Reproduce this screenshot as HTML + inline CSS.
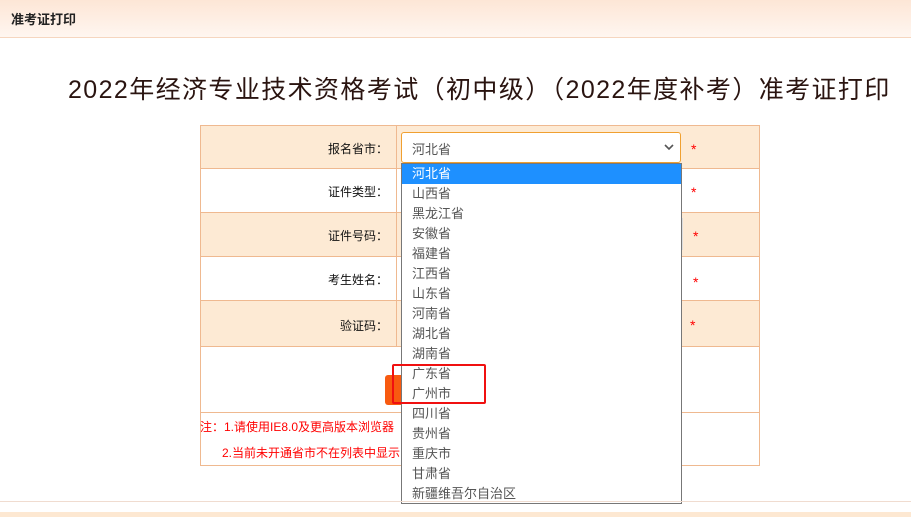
<!DOCTYPE html>
<html><head><meta charset="utf-8"><style>
*{margin:0;padding:0;box-sizing:border-box}
body{width:911px;height:517px;overflow:hidden;background:#fff;font-family:"Liberation Sans","Noto Sans CJK SC",sans-serif;position:relative}
.hdr{position:absolute;left:0;top:0;width:911px;height:38px;background:linear-gradient(180deg,#fde6d6 0%,#fff6f0 100%);border-bottom:1px solid #f6d6bf}
.hdr span{position:absolute;left:11px;top:9px;font-size:13px;font-weight:bold;color:#222}
.title{position:absolute;left:68px;top:70px;font-size:25px;color:#2a1410;white-space:nowrap;letter-spacing:1.4px}
.row{position:absolute;left:200px;width:560px;border:1px solid #efb990;border-bottom:none}
.row .lab{position:absolute;left:0;top:0;width:196px;height:100%;border-right:1px solid #efb990;text-align:right;padding-right:8px;font-size:12px;color:#111}
.bg{background:#fdead4}
.st{position:absolute;color:#f00;font-size:14px}
.sel{position:absolute;left:401px;top:132px;width:280px;height:31px;border:1px solid #f0a030;border-radius:3px;background:#fff;font-size:13px;color:#555;padding:6px 0 0 10px}
.dd{position:absolute;left:401px;top:163px;width:281px;height:341px;border:1px solid #777;background:#fff}
.dd div{height:20px;line-height:20px;padding-left:10px;font-size:13px;color:#555}
.dd .on{background:#1e90ff;color:#fff}
.note{position:absolute;font-size:12px;color:#f00;white-space:nowrap}
</style></head><body>
<div class="hdr"><span>准考证打印</span></div>
<div class="title">2022年经济专业技术资格考试（初中级）（2022年度补考）准考证打印</div>
<div class="row bg" style="top:125px;height:44px"><div class="lab" style="padding-top:14px">报名省市：</div></div>
<div class="row" style="top:168px;height:45px"><div class="lab" style="padding-top:14px">证件类型：</div></div>
<div class="row bg" style="top:212px;height:45px"><div class="lab" style="padding-top:14px">证件号码：</div></div>
<div class="row" style="top:256px;height:45px"><div class="lab" style="padding-top:14px">考生姓名：</div></div>
<div class="row bg" style="top:300px;height:47px"><div class="lab" style="padding-top:16px">验证码：</div></div>
<div class="row" style="top:346px;height:67px"></div>
<div class="row" style="top:412px;height:54px;border-bottom:1px solid #efb990"></div>
<div style="position:absolute;left:385px;top:375px;width:20px;height:30px;background:#f85a10;border-radius:3px"></div>
<div class="note" style="left:200px;top:418px">注：1.请使用IE8.0及更高版本浏览器</div>
<div class="note" style="left:222px;top:444px">2.当前未开通省市不在列表中显示</div>
<div class="st" style="left:691px;top:141px">*</div>
<div class="st" style="left:691px;top:184px">*</div>
<div class="st" style="left:693px;top:228px">*</div>
<div class="st" style="left:693px;top:274px">*</div>
<div class="st" style="left:690px;top:317px">*</div>
<div style="position:absolute;left:681px;top:218px;width:2px;height:32px;border-right:1px solid #ddd"></div>
<div class="sel">河北省<svg style="position:absolute;right:6px;top:11px" width="10" height="7" viewBox="0 0 10 7"><path d="M1 1 L5 5 L9 1" fill="none" stroke="#555" stroke-width="1.6"/></svg></div>
<div class="dd">
<div class="on">河北省</div><div>山西省</div><div>黑龙江省</div><div>安徽省</div><div>福建省</div><div>江西省</div><div>山东省</div><div>河南省</div><div>湖北省</div><div>湖南省</div><div>广东省</div><div>广州市</div><div>四川省</div><div>贵州省</div><div>重庆市</div><div>甘肃省</div><div>新疆维吾尔自治区</div>
</div>
<div style="position:absolute;left:392px;top:364px;width:94px;height:40px;border:2px solid #f01010;border-radius:2px"></div>
<div style="position:absolute;left:0;top:501px;width:911px;height:1px;background:#f0dcd0"></div>
<div style="position:absolute;left:0;top:512px;width:911px;height:5px;background:#fde8d2"></div>
</body></html>
